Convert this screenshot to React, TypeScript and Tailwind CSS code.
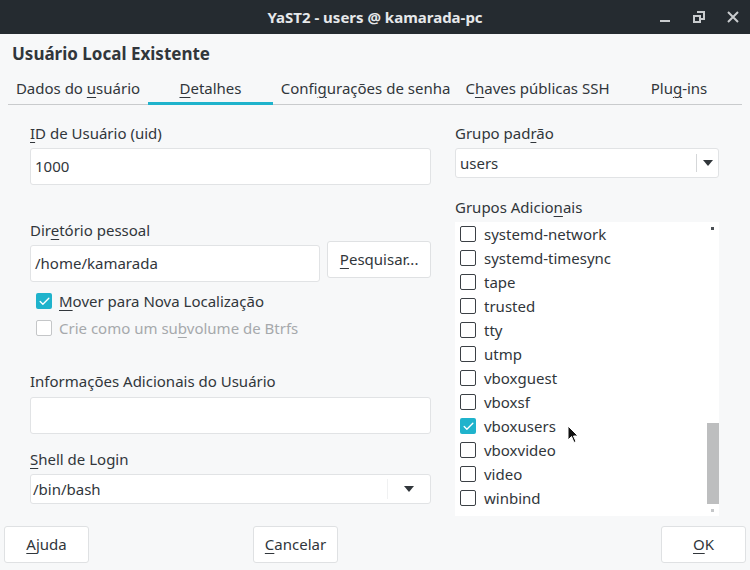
import { Check } from 'lucide-react'

const groups: { name: string; checked?: boolean }[] = [
  { name: 'systemd-network' },
  { name: 'systemd-timesync' },
  { name: 'tape' },
  { name: 'trusted' },
  { name: 'tty' },
  { name: 'utmp' },
  { name: 'vboxguest' },
  { name: 'vboxsf' },
  { name: 'vboxusers', checked: true },
  { name: 'vboxvideo' },
  { name: 'video' },
  { name: 'winbind' },
]

const tabs = [
  { pre: 'Dados do ', key: 'u', post: 'suário', w: 'w-[140px]' },
  { pre: '', key: 'D', post: 'etalhes', w: 'w-[125px]', active: true },
  { pre: 'Confi', key: 'g', post: 'urações de senha', w: 'w-[185px]' },
  { pre: 'C', key: 'h', post: 'aves públicas SSH', w: 'w-[159px]' },
  { pre: 'Plu', key: 'g', post: '-ins', w: 'w-[124px]' },
]

/** Keyboard accelerator letter, underlined like in Qt */
function U({ children }: { children: string }) {
  return <span className="underline underline-offset-[3px] decoration-1">{children}</span>
}

function CheckBox({ checked, disabled }: { checked?: boolean; disabled?: boolean }) {
  if (checked) {
    return (
      <span className="flex h-[16px] w-[16px] shrink-0 items-center justify-center rounded-[2px] bg-[#1fb3cc]">
        <Check size={13} strokeWidth={2.5} className="text-white" />
      </span>
    )
  }
  return (
    <span
      className={`h-[16px] w-[16px] shrink-0 rounded-[2px] border-[1.5px] bg-white ${
        disabled ? 'border-[#c4c6c8]' : 'border-[#3b4045]'
      }`}
    />
  )
}

function Caret() {
  return (
    <svg width="10" height="6" viewBox="0 0 10 6">
      <path d="M0 0h10L5 6z" fill="#31363b" />
    </svg>
  )
}

function Button({ children, className = '' }: { children: React.ReactNode; className?: string }) {
  return (
    <div
      className={`flex h-[37px] w-[85px] items-center justify-center rounded-[3px] border border-[#dfe1e3] bg-white text-[15px] ${className}`}
    >
      {children}
    </div>
  )
}

export default function App() {
  return (
    <div
      className="flex h-[570px] w-[750px] flex-col overflow-hidden bg-[#f7f8f9] text-[#31363b]"
      style={{ fontFamily: '"Noto Sans", "Open Sans", sans-serif' }}
    >
      {/* Title bar */}
      <div className="relative flex h-[34px] shrink-0 items-center justify-center bg-[#252b30]">
        <span className="text-[15px] font-bold text-[#e6e8ea]">YaST2 - users @ kamarada-pc</span>
        <div className="absolute right-[10px] top-0 flex h-full items-center gap-[20px]">
          <svg width="14" height="14" viewBox="0 0 14 14">
            <rect x="2" y="10" width="10" height="2" fill="#c9ccce" />
          </svg>
          <svg width="14" height="14" viewBox="0 0 14 14">
            <path d="M5 2h7v7H9" fill="none" stroke="#c9ccce" strokeWidth="2" />
            <rect x="2" y="6" width="6" height="6" fill="none" stroke="#c9ccce" strokeWidth="2" />
          </svg>
          <svg width="14" height="14" viewBox="0 0 14 14">
            <path d="M2 2l10 10M12 2L2 12" stroke="#c9ccce" strokeWidth="2" />
          </svg>
        </div>
      </div>

      {/* Heading */}
      <div className="px-[12px] pt-[8px] text-[17px] font-bold leading-[24px]">Usuário Local Existente</div>

      {/* Tabs */}
      <div className="mx-[8px] mt-[8px] flex border-b border-[#c9cbcd]">
        {tabs.map((t) => (
          <div
            key={t.post}
            className={`${t.w} -mb-px flex h-[31px] items-center justify-center border-b-[3px] text-[15px] ${
              t.active ? 'border-[#1fb3cc]' : 'border-transparent'
            }`}
          >
            <span>
              {t.pre}
              <U>{t.key}</U>
              {t.post}
            </span>
          </div>
        ))}
      </div>

      {/* Body */}
      <div className="flex flex-1 gap-[24px] pl-[30px] pr-[31px] pt-[17px] text-[15px]">
        {/* Left column */}
        <div className="flex w-[401px] flex-col">
          <div className="leading-[22px]">
            <U>I</U>D de Usuário (uid)
          </div>
          <div className="mt-[4px] flex h-[37px] items-center rounded-[3px] border border-[#e1e3e5] bg-white px-[4px]">
            1000
          </div>

          <div className="mt-[34px] leading-[22px]">
            Dir<U>e</U>tório pessoal
          </div>
          <div className="flex items-start gap-[7px]">
            <div className="mt-[4px] flex h-[37px] w-[291px] items-center rounded-[3px] border border-[#e1e3e5] bg-white px-[4px]">
              /home/kamarada
            </div>
            <div className="flex h-[37px] w-[104px] items-center justify-center rounded-[3px] border border-[#dfe1e3] bg-white">
              <span>
                <U>P</U>esquisar...
              </span>
            </div>
          </div>
          <div className="mt-[8px] flex items-center gap-[7px] pl-[6px] leading-[22px]">
            <CheckBox checked />
            <span>
              <U>M</U>over para Nova Localização
            </span>
          </div>
          <div className="mt-[5px] flex items-center gap-[7px] pl-[6px] leading-[22px] text-[#a6a9ac]">
            <CheckBox disabled />
            <span>
              Crie como um su<U>b</U>volume de Btrfs
            </span>
          </div>

          <div className="mt-[31px] leading-[22px]">Informações Adicionais do Usuário</div>
          <div className="mt-[5px] h-[37px] rounded-[3px] border border-[#e1e3e5] bg-white" />

          <div className="mt-[14px] leading-[22px]">
            <U>S</U>hell de Login
          </div>
          <div className="mt-[4px] flex h-[30px] items-center rounded-[3px] border border-[#e1e3e5] bg-white pl-[2px]">
            <span className="flex-1">/bin/bash</span>
            <span className="h-[20px] w-px bg-[#f0f1f2]" />
            <span className="flex w-[42px] justify-center">
              <Caret />
            </span>
          </div>
        </div>

        {/* Right column */}
        <div className="flex w-[264px] flex-col">
          <div className="leading-[22px]">
            Grupo pad<U>r</U>ão
          </div>
          <div className="mt-[4px] flex h-[30px] items-center rounded-[3px] border border-[#e1e3e5] bg-white pl-[4px]">
            <span className="flex-1">users</span>
            <span className="h-[18px] w-px bg-[#d5d7d9]" />
            <span className="flex w-[21px] justify-center">
              <Caret />
            </span>
          </div>

          <div className="mt-[18px] leading-[22px]">
            Grupos Adicio<U>n</U>ais
          </div>
          <div className="relative mt-[4px] h-[294px] overflow-hidden bg-white">
            <div className="flex flex-col pl-[5px]">
              {groups.map((g) => (
                <div key={g.name} className="flex h-[24px] items-center gap-[8px]">
                  <CheckBox checked={g.checked} />
                  <span>{g.name}</span>
                </div>
              ))}
            </div>
            {/* scrollbar */}
            <span className="absolute right-[5px] top-[5px] h-[3px] w-[3px] bg-[#4a4f54]" />
            <span className="absolute right-0 top-[201px] h-[81px] w-[12px] bg-[#bdbebf]" />
            <span className="absolute bottom-[4px] right-[5px] h-[3px] w-[3px] bg-[#c5c7c9]" />
            {/* mouse pointer */}
            <svg className="absolute left-[112px] top-[203px]" width="12" height="19" viewBox="0 0 12 19">
              <path d="M1 1v14l3.5-3.5 2.5 6 2-1-2.5-5.5H11z" fill="#111" stroke="#fff" strokeWidth="1" />
            </svg>
          </div>
        </div>
      </div>

      {/* Footer buttons */}
      <div className="flex items-center pb-[7px] pl-[4px] pr-[4px]">
        <Button>
          <span>
            <U>A</U>juda
          </span>
        </Button>
        <Button className="ml-[164px]">
          <span>
            <U>C</U>ancelar
          </span>
        </Button>
        <Button className="ml-auto">
          <span>
            <U>O</U>K
          </span>
        </Button>
      </div>
    </div>
  )
}
